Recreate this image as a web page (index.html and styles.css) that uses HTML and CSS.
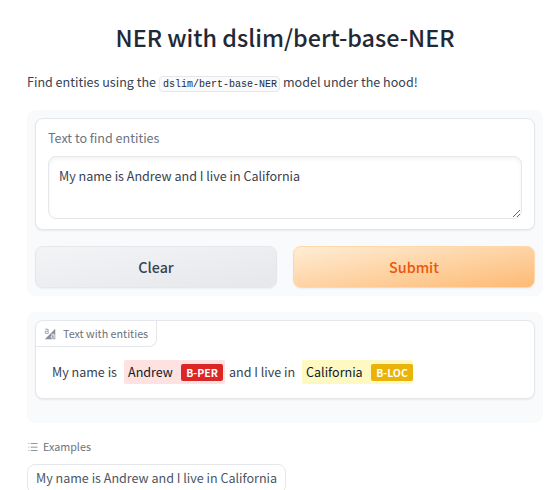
FILE: index.html
```html
<!DOCTYPE html>
<html lang="en">
<head>
<meta charset="utf-8">
<title>NER with dslim/bert-base-NER</title>
<link rel="stylesheet" href="styles.css">
</head>
<body>
<main class="app">
  <h1 class="title">NER with dslim/bert-base-NER</h1>
  <p class="description">Find entities using the <code class="code">dslim/bert-base-NER</code> model under the hood!</p>
  <section class="panel panel-input">
    <div class="card field">
      <label class="field-label" for="source">Text to find entities</label>
      <textarea class="textbox" id="source" spellcheck="false">My name is Andrew and I live in California</textarea>
    </div>
    <div class="actions">
      <button class="button secondary">Clear</button>
      <button class="button primary">Submit</button>
    </div>
  </section>
  <section class="panel panel-output">
    <div class="card result">
      <div class="block-label">
        <svg class="label-icon" viewBox="0 0 32 32" fill="currentColor"><path d="M12 15H5a3 3 0 0 1-3-3v-2a3 3 0 0 1 3-3h5V5a1 1 0 0 0-1-1H3V2h6a3 3 0 0 1 3 3zM5 9a1 1 0 0 0-1 1v2a1 1 0 0 0 1 1h5V9zm15 14v2a1 1 0 0 0 1 1h5v-4h-5a1 1 0 0 0-1 1z"/><path d="M2 30h28V2Zm26-2h-7a3 3 0 0 1-3-3v-2a3 3 0 0 1 3-3h5v-2a1 1 0 0 0-1-1h-6v-2h6a3 3 0 0 1 3 3Z"/></svg>
        <span>Text with entities</span>
      </div>
      <div class="tokens">
        <span class="plain first">My name is</span>
        <span class="entity person"><span class="word">Andrew</span><span class="tag">B-PER</span></span>
        <span class="plain second">and I live in</span>
        <span class="entity location"><span class="word">California</span><span class="tag">B-LOC</span></span>
      </div>
    </div>
  </section>
  <section class="examples">
    <div class="examples-label">
      <svg class="list-icon" viewBox="0 0 32 32" fill="currentColor"><path d="M10 6h18v2H10zm0 18h18v2H10zm0-9h18v2H10zm-6 0h2v2H4zm0-9h2v2H4zm0 18h2v2H4z"/></svg>
      <span>Examples</span>
    </div>
    <button class="example">My name is Andrew and I live in California</button>
  </section>
</main>
</body>
</html>
```
FILE: styles.css
```css
* { box-sizing: border-box; }
html { overflow: hidden; }
body {
  margin: 0;
  height: 490px;
  overflow: hidden;
  background: #fff;
  color: #374151;
  font: 12.56px/20px "Noto Sans CJK SC", sans-serif;
}
button, textarea { font: inherit; color: inherit; margin: 0; }
.app { width: 516px; margin-left: 27px; padding-top: 19px; }
.title {
  margin: 0;
  color: #1f2937;
  font-size: 23.35px;
  line-height: 36px;
  font-weight: 500;
  text-align: center;
  white-space: nowrap;
}
.description { display: flex; align-items: center; gap: 3px; margin: 16px 0 0; height: 22px; line-height: 22px; white-space: nowrap; }
.code {
  height: 16px;
  margin-top: 3px;
  padding: 0 3px;
  border: 1px solid #e5e7eb;
  border-radius: 4px;
  background: #f9fafb;
  color: #1f2937;
  font: 10px/15px "Liberation Mono", monospace;
  width: 121px;
}
.panel { padding: 8px; border-radius: 8px; background: #f9fafb; }
.panel-input { margin-top: 17px; height: 186px; }
.panel-output { margin-top: 16px; height: 111px; }
.card {
  border: 1px solid #e5e7eb;
  border-radius: 8px;
  background: #fff;
  box-shadow: 0 1px 2px rgba(0, 0, 0, .07);
}
.field { height: 112px; padding: 9px 12px; }
.field-label { display: block; height: 28px; line-height: 20px; color: #6b7280; }
.textbox {
  display: block;
  width: 474px;
  height: 63px;
  padding: 9px 10px;
  border: 1px solid #e5e7eb;
  border-radius: 8px;
  background: #fff;
  box-shadow: inset 0 2px 4px rgba(0, 0, 0, .05);
  outline: none;
  overflow: hidden;
  resize: vertical;
}
.actions { display: flex; gap: 16px; margin-top: 16px; }
.button {
  flex: 1;
  height: 42px;
  padding: 0;
  border: 1px solid #e5e7eb;
  border-radius: 8px;
  box-shadow: 0 1px 2px rgba(0, 0, 0, .05);
  font-size: 14.3px;
  font-weight: 500;
}
.secondary { background: linear-gradient(to bottom right, #f3f4f6, #e5e7eb); color: #374151; }
.primary { background: linear-gradient(to bottom right, #ffedd5, #fdba74); border-color: #fed7aa; color: #ea580c; }
.result { height: 79px; overflow: hidden; }
.block-label {
  display: flex;
  align-items: center;
  width: 121px;
  height: 26px;
  padding-left: 8px;
  border: solid #e5e7eb;
  border-width: 0 1px 1px 0;
  border-radius: 0 0 8px 0;
  color: #6b7280;
  font-size: 10.75px;
  white-space: nowrap;
}
.label-icon { width: 12px; height: 12px; margin-right: 7px; opacity: .8; }
.tokens { display: flex; align-items: center; height: 24px; margin: 13px 0 0 16px; white-space: nowrap; }
.plain.first { width: 72px; }
.plain.second { width: 73px; margin-left: 4px; }
.entity { display: flex; align-items: center; height: 24px; padding-left: 4px; border-radius: 2px; color: #111827; }
.person { width: 101px; background: #fee2e2; }
.location { width: 111px; background: #fef9c3; }
.word { flex: 1; }
.tag {
  height: 17px;
  border-radius: 2px;
  color: #fff;
  font-size: 10.5px;
  line-height: 17px;
  font-weight: 700;
  text-align: center;
  width: 42px;
}
.person .tag { background: #dc2626; margin-right: 2px; }
.location .tag { background: #eab308; }
.examples-label { display: flex; align-items: center; height: 20px; margin-top: 14px; color: #6b7280; font-size: 10.75px; }
.list-icon { width: 12px; height: 12px; margin-right: 4px; }
.example {
  display: block;
  width: 259px;
  height: 30px;
  margin-top: 7px;
  padding: 0 8px 2px;
  border: 1px solid #e5e7eb;
  border-radius: 8px;
  background: #fff;
  color: #4b5563;
  text-align: left;
  white-space: nowrap;
}
```
